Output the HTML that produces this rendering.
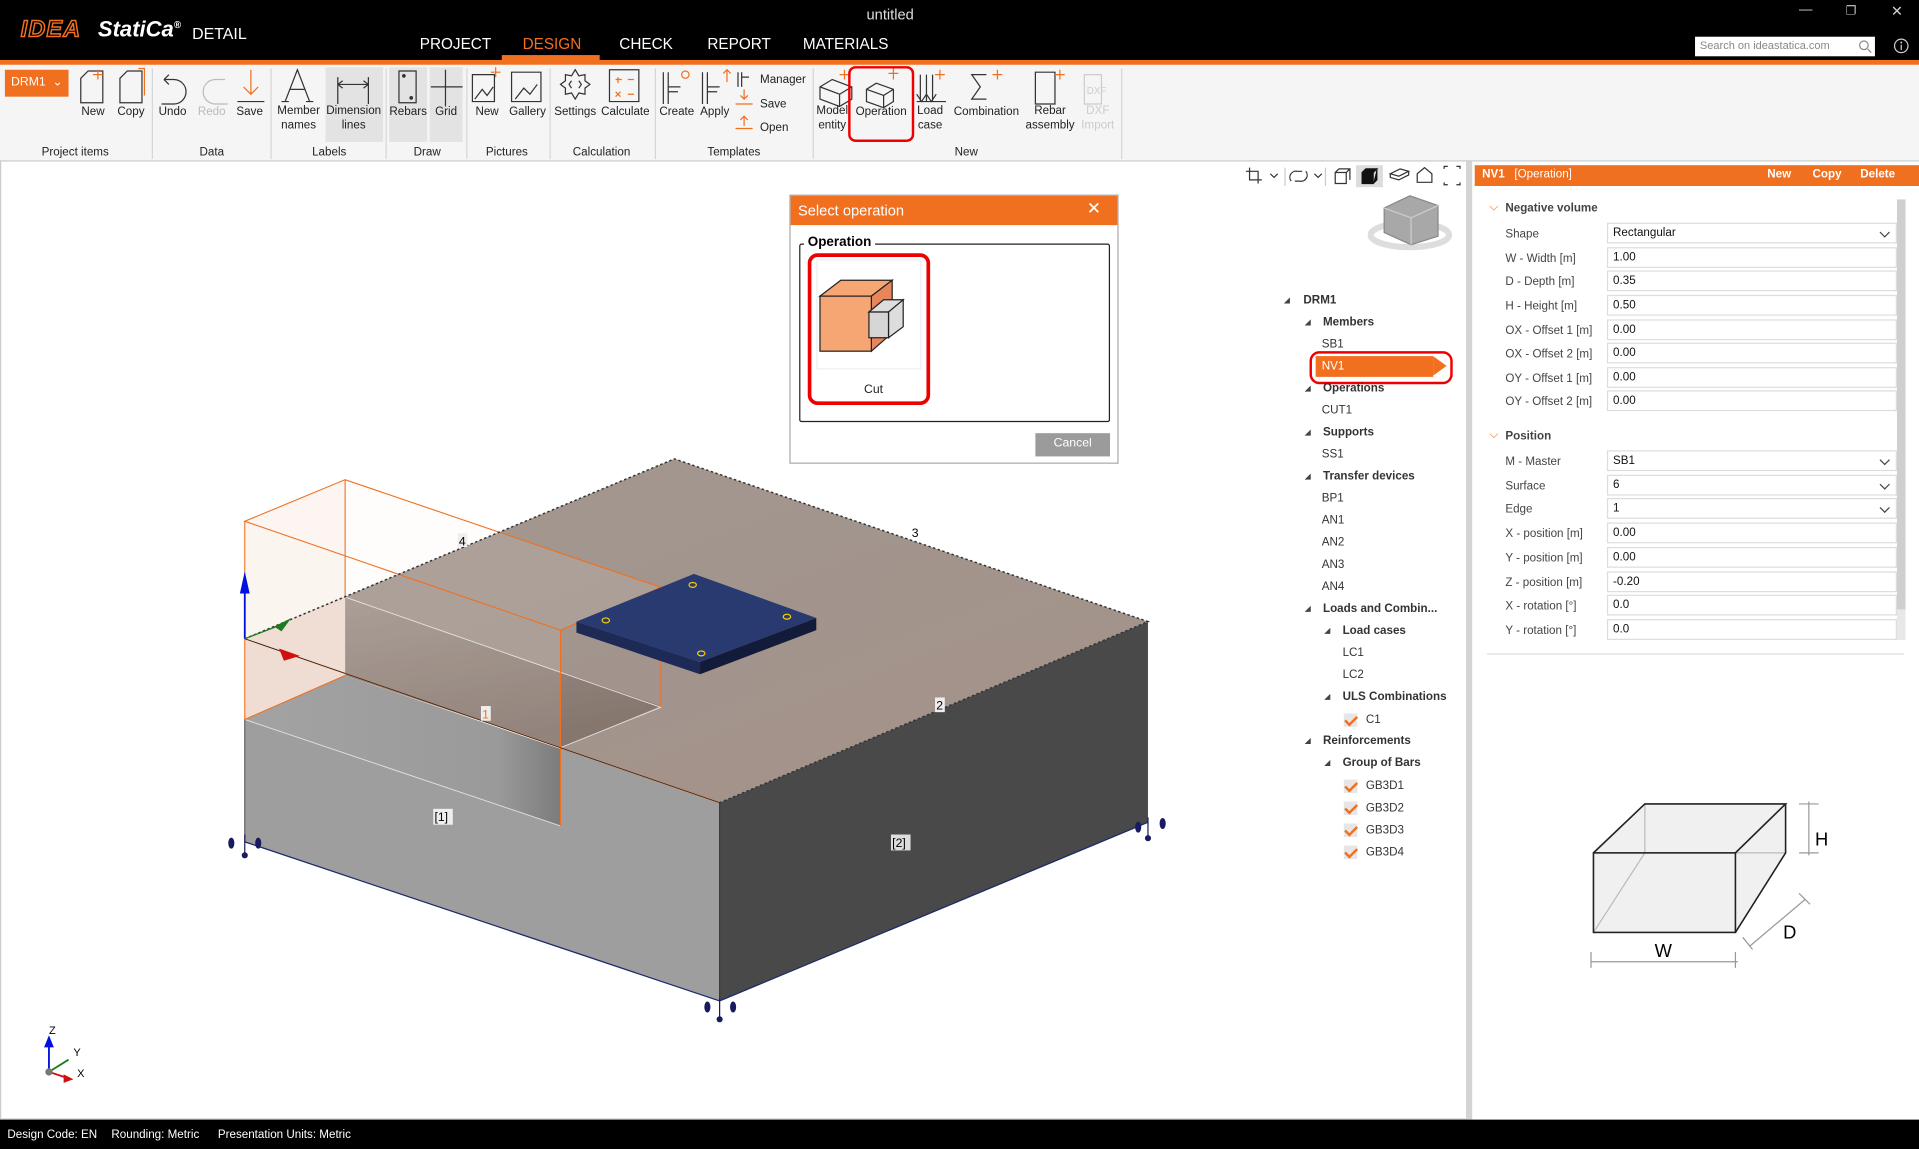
<!DOCTYPE html>
<html><head><meta charset="utf-8"><style>
*{margin:0;padding:0;box-sizing:border-box}
html,body{width:1919px;height:1149px;overflow:hidden;background:#fff;font-family:"Liberation Sans",sans-serif}
#root{position:absolute;left:0;top:0;width:1568px;height:939px;transform:scale(1.22385,1.22364);transform-origin:0 0;background:#fff}
.a{position:absolute;white-space:nowrap}
.t{font-size:9.5px;color:#222}
.rb{font-size:9.5px;color:#222;text-align:center;line-height:12px}
.gl{font-size:9.5px;color:#222;top:119px}
.sep{position:absolute;top:56px;width:1px;height:74px;background:#d6d6d6}
.tr{position:absolute;font-size:9.5px;color:#333}
.trb{position:absolute;font-size:9.5px;color:#333;font-weight:bold}
.tri{position:absolute;width:0;height:0;border-left:5px solid transparent;border-bottom:5px solid #444}
.lab{position:absolute;left:1230px;font-size:9.5px;color:#444}
.inp{position:absolute;left:1313px;width:237px;height:17px;border:1px solid #ddd;background:#fff;font-size:9.5px;color:#111;padding:2px 4px}
.dd::after{content:"";position:absolute;right:6px;top:4px;width:5px;height:5px;border-right:1px solid #444;border-bottom:1px solid #444;transform:rotate(45deg)}
.chk{position:absolute;width:11px;height:11px;background:#e6e6e6}
.chk::after{content:"";position:absolute;left:3px;top:0;width:4px;height:8px;border-right:2px solid #f07020;border-bottom:2px solid #f07020;transform:rotate(45deg)}
</style></head><body><div id="root">

<!-- title bar -->
<div class="a" style="left:0;top:0;width:1568px;height:50px;background:#000"></div>
<div class="a" style="left:0;top:49px;width:1568px;height:4px;background:#f07020"></div>
<div class="a" style="left:410px;top:45px;width:80px;height:5px;background:#f07020"></div>
<div class="a" style="left:17px;top:14px;font-size:19px;font-weight:bold;font-style:italic;color:#000;-webkit-text-stroke:1.2px #f07020;letter-spacing:1px">IDEA</div>
<div class="a" style="left:80px;top:14px;font-size:18px;font-weight:bold;font-style:italic;color:#fff">StatiCa<sup style="font-size:8px">®</sup></div>
<div class="a" style="left:157px;top:20px;font-size:13px;color:#fff">DETAIL</div>
<div class="a" style="left:708px;top:5px;font-size:12px;color:#ddd">untitled</div>
<div class="a" style="left:343px;top:29px;font-size:12.5px;color:#fff">PROJECT</div>
<div class="a" style="left:427px;top:29px;font-size:12.5px;color:#f07020">DESIGN</div>
<div class="a" style="left:506px;top:29px;font-size:12.5px;color:#fff">CHECK</div>
<div class="a" style="left:578px;top:29px;font-size:12.5px;color:#fff">REPORT</div>
<div class="a" style="left:656px;top:29px;font-size:12.5px;color:#fff">MATERIALS</div>
<div class="a" style="left:1385px;top:30px;width:147px;height:16px;background:#fff;font-size:9px;color:#888;padding:2px 4px">Search on ideastatica.com</div>
<svg class="a" style="left:1518px;top:32px" width="12" height="12"><circle cx="5" cy="5" r="3.5" fill="none" stroke="#888"/><line x1="8" y1="8" x2="11" y2="11" stroke="#888"/></svg>
<div class="a" style="left:1470px;top:2px;font-size:11px;color:#ccc">—</div>
<div class="a" style="left:1508px;top:4px;font-size:10px;color:#ccc">❐</div>
<div class="a" style="left:1545px;top:2px;font-size:12px;color:#ccc">✕</div>
<svg class="a" style="left:1547px;top:31px" width="13" height="13"><circle cx="6.5" cy="6.5" r="5.5" fill="none" stroke="#ccc"/><line x1="6.5" y1="5.5" x2="6.5" y2="10" stroke="#ccc"/><circle cx="6.5" cy="3.7" r=".8" fill="#ccc"/></svg>

<!-- ribbon -->
<div class="a" style="left:0;top:53px;width:1568px;height:79px;background:#f5f5f5;border-bottom:1px solid #ccc"></div>
<div class="a" style="left:4px;top:57px;width:52px;height:22px;background:#f07020;color:#fff;font-size:10px;padding:5px 5px">DRM1 &nbsp;⌄</div>
<div class="a" style="left:266px;top:55px;width:47px;height:61px;background:#e3e3e3"></div>
<div class="a" style="left:318px;top:55px;width:31px;height:61px;background:#e3e3e3"></div>
<div class="a" style="left:351px;top:55px;width:27px;height:61px;background:#e3e3e3"></div>
<div class="sep" style="left:124px"></div><div class="sep" style="left:221px"></div><div class="sep" style="left:315px"></div><div class="sep" style="left:381px"></div><div class="sep" style="left:449px"></div><div class="sep" style="left:535px"></div><div class="sep" style="left:664px"></div><div class="sep" style="left:916px"></div>

<svg class="a" style="left:0;top:53px" width="920" height="60" fill="none" stroke="#333" stroke-width="1">
<path d="M66 31v-20l6-6h12v26z" /><path d="M80 4v8M76 8h8" stroke="#f07020"/>
<path d="M98 31v-20l6-6h12v26z"/><path d="M113 3h5v22" stroke="#f07020"/>
<path d="M134 12h8a10 10 0 0 1 0 20h-10 M134 12l4-4M134 12l4 4"/>
<path d="M184 12h-8a10 10 0 0 0 0 20h10" stroke="#bbb"/>
<path d="M205 4v20M199 18l6 6 6-6" stroke="#f07020"/><path d="M194 30h22"/>
<path d="M233 30l10-26 10 26M237 20h12"/><path d="M230 30h6M250 30h6"/>
<path d="M276 10v22M301 10v22M276 16h25M276 16l4-3M276 16l4 3M301 16l-4-3M301 16l-4 3"/>
<path d="M326 5h14v26h-14z"/><circle cx="330" cy="9" r="1" fill="#333"/><circle cx="336" cy="27" r="1" fill="#333"/>
<path d="M364 4v30M352 18h26"/>
<path d="M386 8h18v22h-18zM388 28l6-8 4 5 5-7"/><path d="M405 2v8M401 6h8" stroke="#f07020"/>
<path d="M418 6h24v24h-24zM421 28l7-9 5 5 6-8"/>
<path d="M470 4l3 5 5-1 0 5 4 3-4 3 0 5-5-1-3 5-3-5-5 1 0-5-4-3 4-3 0-5 5 1z"/><path d="M467 19l-2-3 2-3M473 19l2-3-2-3"/>
<path d="M498 4h24v26h-24z"/><path d="M503 12h5M505 10v5M513 12h5M503 22l4 4M507 22l-4 4M513 24h5" stroke="#f07020"/>
<path d="M542 6v26M546 6v26M546 18h10M546 22h8"/><circle cx="560" cy="8" r="3" stroke="#f07020"/>
<path d="M574 6v26M578 6v26M578 18h10M578 22h8"/><path d="M594 14v-10M591 7l3-3 3 3" stroke="#f07020"/>
<path d="M603 6v12M606 6v12M606 10h6"/><path d="M608 28v-8M605 25l3 3 3-3M601 32h14" stroke="#f07020"/><path d="M608 50v-8M605 45l3-3 3 3M601 52h14" stroke="#f07020"/>
<path d="M670 18l10-6 16 6v10l-10 6-16-6z M670 18l16 6v10M686 24l10-6"/><path d="M690 4v8M686 8h8" stroke="#f07020"/>
<path d="M708 20l8-5 14 5v10l-8 5-14-5z M708 20l14 5v10M722 25l8-5"/><path d="M730 3v9M726 7h8" stroke="#f07020"/>
<path d="M749 30h24M752 30v-22M757 30v-22M762 30v-22M749 24l4 6 4-6 4 6 4-6"/><path d="M768 4v8M764 8h8" stroke="#f07020"/>
<path d="M806 8h-12l7 10-7 10h12"/><path d="M815 4v8M811 8h8" stroke="#f07020"/>
<path d="M846 6h16v26h-16z"/><path d="M866 4v8M862 8h8" stroke="#f07020"/>
<path d="M886 8h14v24h-14z" stroke="#ccc"/><text x="888" y="24" font-size="8" fill="#ccc" stroke="none">DXF</text>
</svg>

<div class="a rb" style="left:62px;top:86px;width:28px">New</div>
<div class="a rb" style="left:92px;top:86px;width:30px">Copy</div>
<div class="a rb" style="left:127px;top:86px;width:28px">Undo</div>
<div class="a rb" style="left:159px;top:86px;width:28px;color:#bbb">Redo</div>
<div class="a rb" style="left:190px;top:86px;width:28px">Save</div>
<div class="a rb" style="left:224px;top:85px;width:40px">Member<br>names</div>
<div class="a rb" style="left:264px;top:85px;width:50px">Dimension<br>lines</div>
<div class="a rb" style="left:318px;top:86px;width:31px">Rebars</div>
<div class="a rb" style="left:351px;top:86px;width:27px">Grid</div>
<div class="a rb" style="left:384px;top:86px;width:28px">New</div>
<div class="a rb" style="left:414px;top:86px;width:34px">Gallery</div>
<div class="a rb" style="left:451px;top:86px;width:38px">Settings</div>
<div class="a rb" style="left:489px;top:86px;width:44px">Calculate</div>
<div class="a rb" style="left:537px;top:86px;width:32px">Create</div>
<div class="a rb" style="left:569px;top:86px;width:30px">Apply</div>
<div class="a t" style="left:621px;top:60px">Manager</div>
<div class="a t" style="left:621px;top:80px">Save</div>
<div class="a t" style="left:621px;top:99px">Open</div>
<div class="a rb" style="left:666px;top:85px;width:28px;overflow:hidden">Model<br>entity</div>
<div class="a rb" style="left:695px;top:86px;width:50px">Operation</div>
<div class="a" style="left:693px;top:54px;width:54px;height:62px;border:2.5px solid #e00;border-radius:6px"></div>
<div class="a rb" style="left:747px;top:85px;width:26px">Load<br>case</div>
<div class="a rb" style="left:775px;top:86px;width:62px">Combination</div>
<div class="a rb" style="left:836px;top:85px;width:44px">Rebar<br>assembly</div>
<div class="a rb" style="left:880px;top:85px;width:34px;color:#ccc">DXF<br>Import</div>
<div class="a gl" style="left:34px">Project items</div>
<div class="a gl" style="left:163px">Data</div>
<div class="a gl" style="left:255px">Labels</div>
<div class="a gl" style="left:338px">Draw</div>
<div class="a gl" style="left:397px">Pictures</div>
<div class="a gl" style="left:468px">Calculation</div>
<div class="a gl" style="left:578px">Templates</div>
<div class="a gl" style="left:780px">New</div>

<!-- viewport border -->
<div class="a" style="left:0;top:132px;width:1199px;height:783px;border:1px solid #ccc;border-top:none"></div>
<div class="a" style="left:1198px;top:132px;width:5px;height:783px;background:#d4d4d4"></div>

<!-- 3D scene -->
<svg class="a" style="left:0;top:0" width="1200" height="915">
<defs>
<linearGradient id="gt" x1="0" y1="0" x2="1" y2="1"><stop offset="0" stop-color="#a29890"/><stop offset="1" stop-color="#a39189"/></linearGradient>
<linearGradient id="gw" x1="0" y1="0" x2="0.3" y2="1"><stop offset="0" stop-color="#a1948c"/><stop offset="1" stop-color="#85766e"/></linearGradient>
<linearGradient id="gf" x1="0" y1="0" x2="1" y2="0"><stop offset="0" stop-color="#a3a3a3"/><stop offset=".8" stop-color="#9a9a9a"/><stop offset="1" stop-color="#7c7c7c"/></linearGradient>
</defs>
<polygon points="200,522 551,375 938,508 588,656" fill="url(#gt)"/>
<polygon points="588,656 938,508 938,672 588,818" fill="#494949"/>
<polygon points="200,588 458,675 458,611 588,656 588,818 200,688" fill="#9e9e9e"/>
<!-- cut -->
<polygon points="282,488 540,577 458,611 282,552" fill="url(#gw)"/>
<polygon points="200,522 282,488 282,552 200,588" fill="#efdcd2"/>
<polygon points="200,588 282,552 458,612 458,675" fill="url(#gf)"/>
<polyline points="282,488 540,578 458,611" fill="none" stroke="#ddd" stroke-width=".8"/>
<line x1="200" y1="588" x2="458" y2="675" stroke="#ddd" stroke-width=".8"/>
<!-- NV box -->
<polygon points="200,426 282,392 540,480 458,515" fill="rgba(250,235,228,.12)"/>
<polygon points="200,426 282,392 282,488 200,522" fill="rgba(250,240,234,.6)"/>
<polygon points="200,426 458,515 458,611 200,522" fill="rgba(250,235,228,.12)"/>
<g stroke="#f07020" stroke-width=".9" fill="none">
<polygon points="200,426 282,392 540,480 458,515"/>
<line x1="200" y1="426" x2="200" y2="588"/><line x1="458" y1="515" x2="458" y2="675"/>
<line x1="282" y1="392" x2="282" y2="488"/><line x1="540" y1="480" x2="540" y2="578"/>
<line x1="200" y1="588" x2="282" y2="552"/>
<line x1="200" y1="522" x2="588" y2="656"/>
</g>
<g stroke="#333" stroke-width="1.2" stroke-dasharray="2,2" fill="none">
<polyline points="200,522 551,375 938,508 588,656"/>
</g>
<line x1="200" y1="522" x2="588" y2="656" stroke="#222" stroke-width=".6"/>
<line x1="588" y1="656" x2="588" y2="818" stroke="#222" stroke-width=".7"/>
<line x1="200" y1="688" x2="588" y2="818" stroke="#1a2a6a" stroke-width="1"/>
<line x1="588" y1="818" x2="938" y2="672" stroke="#1a2a6a" stroke-width="1"/>
<line x1="200" y1="588" x2="200" y2="688" stroke="#333" stroke-width=".7"/>
<!-- plate -->
<polygon points="471,508 567,469 667,505 572,541" fill="#293a70"/>
<polygon points="471,508 572,541 572,551 471,517" fill="#1c2a55"/>
<polygon points="572,541 667,505 667,515 572,551" fill="#121b3a"/>
<g fill="none" stroke="#f5d000" stroke-width="1"><ellipse cx="566" cy="478" rx="3" ry="2"/><ellipse cx="495" cy="507" rx="3" ry="2"/><ellipse cx="643" cy="504" rx="3" ry="2"/><ellipse cx="573" cy="534" rx="3" ry="2"/></g>
<!-- axes -->
<line x1="200" y1="522" x2="200" y2="480" stroke="#0010e0" stroke-width="1.5"/><polygon points="196,485 204,485 200,467" fill="#0010e0"/>
<polygon points="224,512 238,505 230,516" fill="#1e7a1e"/><line x1="200" y1="522" x2="226" y2="512" stroke="#1e7a1e"/>
<polygon points="228,530 245,536 232,540" fill="#d01010"/>
<!-- supports -->
<g stroke="#1a1a60" fill="#1a1a60"><line x1="200" y1="682" x2="200" y2="700"/><circle cx="200" cy="699" r="2"/><ellipse cx="189" cy="689" rx="2" ry="4"/><ellipse cx="211" cy="689" rx="2" ry="4"/>
<line x1="588" y1="816" x2="588" y2="834"/><circle cx="588" cy="833" r="2"/><ellipse cx="578" cy="823" rx="2" ry="4"/><ellipse cx="599" cy="823" rx="2" ry="4"/>
<line x1="938" y1="668" x2="938" y2="686"/><circle cx="938" cy="685" r="2"/><ellipse cx="930" cy="676" rx="2" ry="4"/><ellipse cx="950" cy="673" rx="2" ry="4"/></g>
<g font-size="10" font-family="Liberation Sans">
<rect x="374" y="436" width="8" height="11" fill="#eee"/><text x="375" y="446">4</text>
<text x="745" y="439">3</text>
<rect x="393" y="577" width="8" height="12" fill="#eee"/><text x="394" y="587" fill="#f07020">1</text>
<rect x="764" y="570" width="8" height="12" fill="#eee"/><text x="765" y="580">2</text>
<rect x="354" y="661" width="16" height="13" fill="#eee"/><text x="355" y="671">[1]</text>
<rect x="728" y="682" width="16" height="13" fill="#ddd"/><text x="729" y="692">[2]</text>
</g>
<!-- triad -->
<g stroke-width="1.5"><line x1="40" y1="876" x2="40" y2="852" stroke="#0010e0"/><polygon points="36,856 44,856 40,846" fill="#0010e0"/>
<line x1="40" y1="876" x2="56" y2="866" stroke="#1e7a1e"/><line x1="40" y1="876" x2="58" y2="882" stroke="#d01010"/><polygon points="52,878 60,882 52,885" fill="#d01010"/><circle cx="40" cy="876" r="3" fill="#777" stroke="none"/></g>
<text x="40" y="845" font-size="9" font-family="Liberation Sans">Z</text><text x="60" y="863" font-size="9" font-family="Liberation Sans">Y</text><text x="63" y="880" font-size="9" font-family="Liberation Sans">X</text>
<!-- view toolbar -->
<g fill="none" stroke="#333" stroke-width="1">
<path d="M1018 140h10v10M1021 137v10h10"/><path d="M1038 142l3 3 3-3M1074 142l3 3 3-3"/>
<path d="M1055 148a5 5 0 0 1 5-8h4M1067 140a5 5 0 0 1-5 8h-4"/>
<path d="M1091 141h9v9h-9zM1094 138h9v9M1091 141l3-3M1100 141l3-3"/>
<path d="M1164 137l-6 5v7h12v-7z"/><path d="M1180 138v-2h3M1190 136h3v2M1180 149v2h3M1193 149v2h-3"/>
<path d="M1136 142l8-4 7 2-8 4zM1136 142v3l7 2 8-4v-3"/>
</g>
<rect x="1108" y="135" width="22" height="18" fill="#ddd"/><path d="M1113 141h9v9h-9zM1113 141l3-3h9l-3 3M1122 150l3-3v-9" fill="#111" stroke="#111"/>
<line x1="1050" y1="137" x2="1050" y2="152" stroke="#ccc"/><line x1="1083" y1="137" x2="1083" y2="152" stroke="#ccc"/>
<!-- view cube -->
<ellipse cx="1152" cy="192" rx="32" ry="10" fill="none" stroke="#ddd" stroke-width="5"/>
<polygon points="1131,170 1152,160 1175,168 1175,193 1153,200 1131,190" fill="#a8a8a8" stroke="#888"/>
<polyline points="1131,170 1153,178 1175,168" fill="none" stroke="#ccc"/><line x1="1153" y1="178" x2="1153" y2="200" stroke="#ccc"/>
</svg>

<!-- tree -->
<div class="tri" style="left:1049px;top:243px"></div><div class="trb" style="left:1065px;top:240px">DRM1</div>
<div class="tri" style="left:1066px;top:261px"></div><div class="trb" style="left:1081px;top:258px">Members</div>
<div class="tr" style="left:1080px;top:276px">SB1</div>
<div class="a" style="left:1075px;top:291px;width:96px;height:17px;background:#f07020"></div>
<div class="a" style="left:1171px;top:291px;width:0;height:0;border-top:8.5px solid transparent;border-bottom:8.5px solid transparent;border-left:11px solid #f07020"></div>
<div class="tr" style="left:1080px;top:294px;color:#fff">NV1</div>
<div class="a" style="left:1070px;top:287px;width:117px;height:27px;border:2.5px solid #e00;border-radius:8px"></div>
<div class="tri" style="left:1066px;top:315px"></div><div class="trb" style="left:1081px;top:312px">Operations</div>
<div class="tr" style="left:1080px;top:330px">CUT1</div>
<div class="tri" style="left:1066px;top:351px"></div><div class="trb" style="left:1081px;top:348px">Supports</div>
<div class="tr" style="left:1080px;top:366px">SS1</div>
<div class="tri" style="left:1066px;top:387px"></div><div class="trb" style="left:1081px;top:384px">Transfer devices</div>
<div class="tr" style="left:1080px;top:402px">BP1</div>
<div class="tr" style="left:1080px;top:420px">AN1</div>
<div class="tr" style="left:1080px;top:438px">AN2</div>
<div class="tr" style="left:1080px;top:456px">AN3</div>
<div class="tr" style="left:1080px;top:474px">AN4</div>
<div class="tri" style="left:1066px;top:495px"></div><div class="trb" style="left:1081px;top:492px">Loads and Combin...</div>
<div class="tri" style="left:1082px;top:513px"></div><div class="trb" style="left:1097px;top:510px">Load cases</div>
<div class="tr" style="left:1097px;top:528px">LC1</div>
<div class="tr" style="left:1097px;top:546px">LC2</div>
<div class="tri" style="left:1082px;top:567px"></div><div class="trb" style="left:1097px;top:564px">ULS Combinations</div>
<div class="chk" style="left:1098px;top:583px"></div><div class="tr" style="left:1116px;top:583px">C1</div>
<div class="tri" style="left:1066px;top:603px"></div><div class="trb" style="left:1081px;top:600px">Reinforcements</div>
<div class="tri" style="left:1082px;top:621px"></div><div class="trb" style="left:1097px;top:618px">Group of Bars</div>
<div class="chk" style="left:1098px;top:637px"></div><div class="tr" style="left:1116px;top:637px">GB3D1</div>
<div class="chk" style="left:1098px;top:655px"></div><div class="tr" style="left:1116px;top:655px">GB3D2</div>
<div class="chk" style="left:1098px;top:673px"></div><div class="tr" style="left:1116px;top:673px">GB3D3</div>
<div class="chk" style="left:1098px;top:691px"></div><div class="tr" style="left:1116px;top:691px">GB3D4</div>

<!-- dialog -->
<div class="a" style="left:645px;top:159px;width:269px;height:220px;background:#fff;border:1px solid #aaa"></div>
<div class="a" style="left:646px;top:160px;width:267px;height:24px;background:#f07020;color:#fff;font-size:12px;padding:5px 6px">Select operation</div>
<div class="a" style="left:888px;top:162px;color:#fff;font-size:14px">✕</div>
<div class="a" style="left:653px;top:199px;width:254px;height:146px;border:1px solid #222;border-radius:2px"></div>
<div class="a" style="left:657px;top:192px;background:#fff;padding:0 3px;font-size:11px;font-weight:bold;color:#000">Operation</div>
<div class="a" style="left:660px;top:207px;width:100px;height:124px;border:3px solid #e00;border-radius:8px"></div>
<div class="a" style="left:667px;top:212px;width:86px;height:90px;border:1px solid #eee"></div>
<svg class="a" style="left:667px;top:212px" width="88" height="80" stroke="#222" stroke-width="1">
<polygon points="3,30 20,17 62,17 45,30" fill="#f5a673"/>
<polygon points="45,30 62,17 62,60 45,75" fill="#e8855a"/>
<rect x="3" y="30" width="42" height="45" fill="#f5a673"/>
<polygon points="43,43 55,33 71,33 59,43" fill="#ddd"/>
<polygon points="59,43 71,33 71,55 59,64" fill="#ddd"/>
<rect x="43" y="43" width="16" height="21" fill="#d6d6d6"/>
</svg>
<div class="a" style="left:706px;top:313px;font-size:10px;color:#222">Cut</div>
<div class="a" style="left:846px;top:354px;width:61px;height:19px;background:#9b9b9b;color:#fff;font-size:10px;text-align:center;padding-top:3px">Cancel</div>

<!-- right panel -->
<div class="a" style="left:1203px;top:132px;width:365px;height:783px;background:#fff"></div>
<div class="a" style="left:1205px;top:135px;width:363px;height:17px;background:#f07020"></div>
<div class="a" style="left:1211px;top:137px;font-size:9.5px;color:#fff"><b>NV1</b> &nbsp; [Operation]</div>
<div class="a" style="left:1444px;top:137px;font-size:9.5px;color:#fff;font-weight:bold">New</div>
<div class="a" style="left:1481px;top:137px;font-size:9.5px;color:#fff;font-weight:bold">Copy</div>
<div class="a" style="left:1520px;top:137px;font-size:9.5px;color:#fff;font-weight:bold">Delete</div>
<div class="a" style="left:1550px;top:163px;width:7px;height:360px;background:#e8e8e8"></div>
<div class="a" style="left:1550px;top:163px;width:7px;height:335px;background:#cfcfcf"></div>
<div class="a" style="left:1217px;top:164px;color:#f07020;font-size:10px">⌵</div>
<div class="a" style="left:1230px;top:165px;font-size:9.5px;font-weight:bold;color:#444">Negative volume</div>
<div class="lab" style="top:186px">Shape</div><div class="inp dd" style="top:182px">Rectangular</div>
<div class="lab" style="top:206px">W - Width [m]</div><div class="inp" style="top:202px">1.00</div>
<div class="lab" style="top:225px">D - Depth [m]</div><div class="inp" style="top:221px">0.35</div>
<div class="lab" style="top:245px">H - Height [m]</div><div class="inp" style="top:241px">0.50</div>
<div class="lab" style="top:265px">OX - Offset 1 [m]</div><div class="inp" style="top:261px">0.00</div>
<div class="lab" style="top:284px">OX - Offset 2 [m]</div><div class="inp" style="top:280px">0.00</div>
<div class="lab" style="top:304px">OY - Offset 1 [m]</div><div class="inp" style="top:300px">0.00</div>
<div class="lab" style="top:323px">OY - Offset 2 [m]</div><div class="inp" style="top:319px">0.00</div>
<div class="a" style="left:1217px;top:350px;color:#f07020;font-size:10px">⌵</div>
<div class="a" style="left:1230px;top:351px;font-size:9.5px;font-weight:bold;color:#444">Position</div>
<div class="lab" style="top:372px">M - Master</div><div class="inp dd" style="top:368px">SB1</div>
<div class="lab" style="top:392px">Surface</div><div class="inp dd" style="top:388px">6</div>
<div class="lab" style="top:411px">Edge</div><div class="inp dd" style="top:407px">1</div>
<div class="lab" style="top:431px">X - position [m]</div><div class="inp" style="top:427px">0.00</div>
<div class="lab" style="top:451px">Y - position [m]</div><div class="inp" style="top:447px">0.00</div>
<div class="lab" style="top:471px">Z - position [m]</div><div class="inp" style="top:467px">-0.20</div>
<div class="lab" style="top:490px">X - rotation [°]</div><div class="inp" style="top:486px">0.0</div>
<div class="lab" style="top:510px">Y - rotation [°]</div><div class="inp" style="top:506px">0.0</div>
<div class="a" style="left:1215px;top:534px;width:341px;height:1px;background:#ddd"></div>

<svg class="a" style="left:1290px;top:645px" width="220" height="150" font-family="Liberation Sans">
<polygon points="12,52 54,12 169,12 169,52 128,117 12,117" fill="#f0f0f0"/>
<g stroke="#bbb" fill="none"><polyline points="54,12 54,52 169,52"/><line x1="54" y1="52" x2="12" y2="117"/></g>
<g stroke="#222" stroke-width="1.3" fill="none"><rect x="12" y="52" width="116" height="65"/><polyline points="12,52 54,12 169,12 128,52"/><polyline points="169,12 169,52 128,117"/></g>
<g stroke="#999" fill="none"><line x1="188" y1="10" x2="188" y2="54"/><line x1="180" y1="12" x2="196" y2="12"/><line x1="180" y1="52" x2="196" y2="52"/>
<line x1="10" y1="141" x2="130" y2="141"/><line x1="10" y1="133" x2="10" y2="146"/><line x1="128" y1="133" x2="128" y2="146"/>
<line x1="140" y1="128" x2="185" y2="90"/><line x1="134" y1="121" x2="142" y2="131"/><line x1="180" y1="85" x2="189" y2="94"/></g>
<text x="193" y="46" font-size="15">H</text><text x="167" y="122" font-size="15">D</text><text x="62" y="137" font-size="15">W</text>
</svg>

<!-- status bar -->
<div class="a" style="left:0;top:915px;width:1568px;height:24px;background:#000"></div>
<div class="a" style="left:6px;top:922px;font-size:9.5px;color:#fff">Design Code: EN</div>
<div class="a" style="left:91px;top:922px;font-size:9.5px;color:#fff">Rounding: Metric</div>
<div class="a" style="left:178px;top:922px;font-size:9.5px;color:#fff">Presentation Units: Metric</div>
</div></body></html>
